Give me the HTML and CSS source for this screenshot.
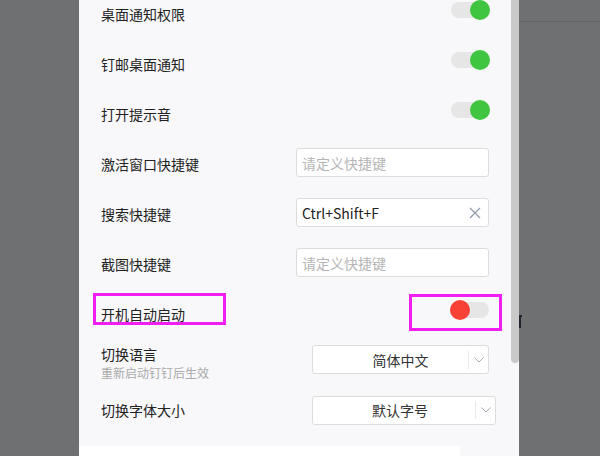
FILE: index.html
```html
<!DOCTYPE html>
<html lang="zh-CN">
<head>
  <meta charset="UTF-8" />
  <meta name="viewport" content="width=device-width, initial-scale=1.0"/>
  <title>设置</title>
  <link rel="stylesheet" href="styles.css">
</head>
<body>
  <div class="app">
    <div class="side"></div>

    <div class="main">
      <div class="panel">
        <div class="list">
          <div class="row">
            <span class="label">桌面通知权限</span>
            <div class="switch"><span class="knob"></span></div>
          </div>

          <div class="row">
            <span class="label">钉邮桌面通知</span>
            <div class="switch"><span class="knob"></span></div>
          </div>

          <div class="row">
            <span class="label">打开提示音</span>
            <div class="switch"><span class="knob"></span></div>
          </div>

          <div class="row">
            <span class="label">激活窗口快捷键</span>
            <div class="field">
              <input type="text" placeholder="请定义快捷键"/>
            </div>
          </div>

          <div class="row">
            <span class="label">搜索快捷键</span>
            <div class="field">
              <input type="text" value="Ctrl+Shift+F"/>
              <svg class="clear" width="12" height="12" viewBox="0 0 12 12">
                <path d="M1 1 L11 11 M11 1 L1 11" stroke="#8e9ba8" stroke-width="1.3" fill="none"/>
              </svg>
            </div>
          </div>

          <div class="row">
            <span class="label">截图快捷键</span>
            <div class="field">
              <input type="text" placeholder="请定义快捷键"/>
            </div>
          </div>

          <div class="row">
            <span class="label">开机自动启动</span>
            <div class="switch off"><span class="knob"></span></div>
            <!-- annotation marks -->
            <div class="mark mark-label"></div>
            <div class="mark mark-switch"></div>
          </div>

          <div class="row row-lang">
            <div class="label-group">
              <div class="label label-title">切换语言</div>
              <div class="hint">重新启动钉钉后生效</div>
            </div>
            <div class="select">
              <span class="select-value">简体中文</span>
              <span class="select-arrow">
                <svg width="10" height="6" viewBox="0 0 10 6">
                  <path d="M0.5 0.5 L5 5 L9.5 0.5" stroke="#a3abb8" stroke-width="1" fill="none"/>
                </svg>
              </span>
            </div>
          </div>

          <div class="row">
            <span class="label">切换字体大小</span>
            <div class="select select-wide">
              <span class="select-value">默认字号</span>
              <span class="select-arrow">
                <svg width="10" height="6" viewBox="0 0 10 6">
                  <path d="M0.5 0.5 L5 5 L9.5 0.5" stroke="#a3abb8" stroke-width="1" fill="none"/>
                </svg>
              </span>
            </div>
          </div>
        </div>
      </div>
      <div class="foot"><div class="foot-white"></div></div>
    </div>

    <div class="scrollbar"><div class="thumb"></div></div>

    <div class="outside">
      <div class="topbar"></div>
      <div class="cut-glyph"></div>
    </div>
  </div>
</body>
</html>
```

FILE: styles.css
```css
html, body {
  margin: 0;
  padding: 0;
}
body {
  background-color: #6f7072;
  font-family: "Noto Sans CJK SC", "Noto Sans", sans-serif;
  color: #222;
}
.app {
  display: flex;
  height: 456px;
  overflow: hidden;
}
.side {
  width: 79px;
  flex: none;
}
.main {
  width: 432px;
  flex: none;
  display: flex;
  flex-direction: column;
}
.panel {
  height: 446px;
  background-color: #f8f8fa;
  overflow: hidden;
}
.foot {
  flex: 1;
  display: flex;
  background-color: #f8f8fa;
}
.foot-white {
  width: 381px;
  background-color: #fff;
}
.scrollbar {
  width: 8px;
  flex: none;
  background-color: #f8f8fa;
}
.thumb {
  height: 363px;
  background-color: #c9c9c9;
  border-radius: 0 0 4px 4px;
}
.outside {
  flex: 1;
  position: relative;
}
.topbar {
  height: 21px;
  border-bottom: 1px solid #636466;
}
.cut-glyph {
  position: absolute;
  left: 0;
  top: 315px;
  width: 1px;
  height: 11px;
  border-top: 2px solid #23222c;
  border-left: 2px solid #23222c;
}

.list {
  margin-top: -11px;
}
.row {
  position: relative;
  height: 50px;
  display: flex;
  align-items: center;
  justify-content: space-between;
  padding: 0 21px 0 22px;
}
.row-lang {
  height: 46px;
}
.label {
  font-size: 14px;
  line-height: 18px;
  color: #222;
}
.label-title {
  line-height: 20px;
}
.hint {
  font-size: 12px;
  line-height: 17px;
  color: #aaa;
}

.switch {
  width: 39px;
  height: 16px;
  margin-top: -8px;
  border-radius: 8px;
  background-color: #e6e6e6;
  display: flex;
  align-items: center;
  justify-content: flex-end;
}
.switch.off {
  justify-content: flex-start;
  margin-right: 1px;
}
.knob {
  width: 20px;
  height: 20px;
  flex: none;
  border-radius: 50%;
  background-color: #3fc540;
}
.switch.off .knob {
  background-color: #f84236;
}

.field {
  width: 193px;
  height: 29px;
  margin-top: -3px;
  margin-right: 1px;
  box-sizing: border-box;
  border: 1px solid #dcdcdc;
  border-radius: 3px;
  background-color: #fff;
  display: flex;
  align-items: center;
  padding: 0 7px 0 5px;
}
.field input {
  flex: 1;
  min-width: 0;
  border: none;
  outline: none;
  padding: 0;
  background: transparent;
  font-family: "Noto Sans CJK SC", "Noto Sans", sans-serif;
  font-size: 14px;
  color: #222;
}
.field input::placeholder {
  color: #b5b5b5;
}
.clear {
  flex: none;
}

.select {
  width: 177px;
  height: 29px;
  margin-top: -5px;
  margin-right: 1px;
  box-sizing: border-box;
  border: 1px solid #dcdcdc;
  border-radius: 3px;
  background-color: #fff;
  display: flex;
  align-items: center;
}
.select-wide {
  width: 184px;
  margin-top: 0;
  margin-right: -6px;
}
.select-value {
  flex: 1;
  text-align: center;
  padding-left: 20px;
  font-size: 14px;
  color: #333;
}
.select-wide .select-value {
  padding-left: 12px;
}
.select-arrow {
  width: 19px;
  height: 18px;
  border-left: 1px solid #e8e8e8;
  display: flex;
  align-items: center;
  justify-content: center;
}

.mark {
  position: absolute;
  border: 3px solid #f01ef0;
  box-sizing: border-box;
}
.mark-label {
  left: 14px;
  top: 4px;
  width: 133px;
  height: 32px;
}
.mark-switch {
  left: 330px;
  top: 5px;
  width: 93px;
  height: 37px;
}
```
